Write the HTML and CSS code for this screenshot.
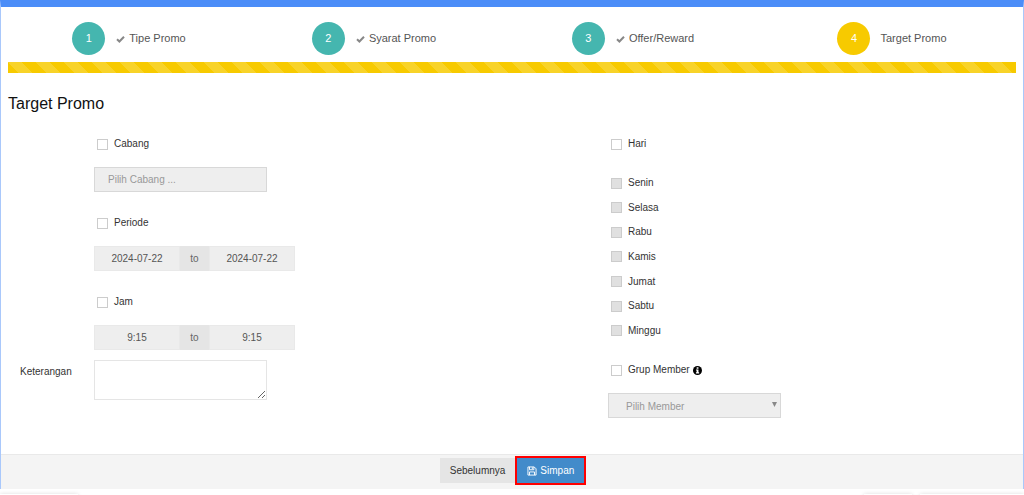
FILE: index.html
```html
<!DOCTYPE html>
<html lang="id">
<head>
<meta charset="utf-8">
<title>Target Promo</title>
<link rel="stylesheet" href="styles.css">
</head>
<body>
<main class="portlet">
  <ol class="steps">
    <li class="step"><span class="step-number">1</span><svg class="check" viewBox="0 0 9 8"><path d="M1 4.2 3.4 6.5 8 1.7"/></svg><span class="step-name">Tipe Promo</span></li>
    <li class="step"><span class="step-number">2</span><svg class="check" viewBox="0 0 9 8"><path d="M1 4.2 3.4 6.5 8 1.7"/></svg><span class="step-name">Syarat Promo</span></li>
    <li class="step"><span class="step-number">3</span><svg class="check" viewBox="0 0 9 8"><path d="M1 4.2 3.4 6.5 8 1.7"/></svg><span class="step-name">Offer/Reward</span></li>
    <li class="step step-active"><span class="step-number">4</span><span class="step-name">Target Promo</span></li>
  </ol>
  <div class="progress"></div>
  <h1 class="title">Target Promo</h1>
  <form class="form" id="promo">
    <div class="column">
      <div class="field">
        <label class="option"><input class="box" type="checkbox">Cabang</label>
        <input class="control" type="text" placeholder="Pilih Cabang ..." aria-label="Pilih Cabang" disabled>
      </div>
      <div class="field">
        <label class="option"><input class="box" type="checkbox">Periode</label>
        <div class="range">
          <input class="range-input" type="text" value="2024-07-22" aria-label="Periode mulai" disabled>
          <span class="range-to">to</span>
          <input class="range-input" type="text" value="2024-07-22" aria-label="Periode selesai" disabled>
        </div>
      </div>
      <div class="field field-tight">
        <label class="option"><input class="box" type="checkbox">Jam</label>
        <div class="range">
          <input class="range-input" type="text" value="9:15" aria-label="Jam mulai" disabled>
          <span class="range-to">to</span>
          <input class="range-input" type="text" value="9:15" aria-label="Jam selesai" disabled>
        </div>
      </div>
      <label class="note-label" for="keterangan">Keterangan</label>
      <textarea class="note" id="keterangan"></textarea>
    </div>
    <div class="column">
      <div class="field field-days">
        <label class="option"><input class="box" type="checkbox">Hari</label>
        <div class="days">
          <label class="option"><input class="box" type="checkbox" disabled>Senin</label>
          <label class="option"><input class="box" type="checkbox" disabled>Selasa</label>
          <label class="option"><input class="box" type="checkbox" disabled>Rabu</label>
          <label class="option"><input class="box" type="checkbox" disabled>Kamis</label>
          <label class="option"><input class="box" type="checkbox" disabled>Jumat</label>
          <label class="option"><input class="box" type="checkbox" disabled>Sabtu</label>
          <label class="option"><input class="box" type="checkbox" disabled>Minggu</label>
        </div>
      </div>
      <div class="field">
        <label class="option"><input class="box" type="checkbox">Grup Member
          <svg class="info" viewBox="0 0 16 16"><circle cx="8" cy="8" r="8"/><path d="M6.5 2.4h3.2v2.4H6.5zM5.3 6.4h4.4v4.9h1.2v1.9H5.2v-1.9h1.3V8.2H5.3z"/></svg>
        </label>
        <div class="select-wrap">
          <select class="control select" aria-label="Pilih Member" disabled><option>Pilih Member</option></select>
          <svg class="caret" viewBox="0 0 5 5"><path d="M0 0h5L2.5 5z"/></svg>
        </div>
      </div>
    </div>
  </form>
  <footer class="actions">
    <button class="button" type="button">Sebelumnya</button>
    <button class="button button-save" type="submit" form="promo"><svg class="save" viewBox="0 0 16 16"><path d="M1.5 1.5h10l3 3v10h-13zM4 1.5V6h7V1.5M8.5 2v3M4 14.5v-5h8v5"/></svg>Simpan</button>
  </footer>
</main>
<div class="below">
  <div class="shade"></div>
  <div class="shade"></div>
  <div class="shade"></div>
</div>
</body>
</html>
```
FILE: styles.css
```css
* { box-sizing: border-box; }

body {
  margin: 0;
  overflow: hidden;
  background: #fff;
  color: #333;
  font: 10px/14px "Liberation Sans", Arial, sans-serif;
}

input, select, textarea, button { font: inherit; border-radius: 0; }

.portlet {
  border: 1px solid #a9c8fb;
  border-top: 7px solid #4b8df8;
  border-bottom: 0;
}

.steps {
  display: grid;
  grid-template-columns: 244fr 246fr 272fr 246fr;
  margin: 0 7px;
  padding: 15px 0 7px;
  list-style: none;
  font-size: 11px;
  color: #555;
}

.step { display: flex; align-items: center; justify-content: center; }

.step-number {
  width: 33px;
  height: 33px;
  margin-right: 11px;
  border-radius: 50%;
  background: #45b6af;
  color: #fff;
  line-height: 32px;
  text-align: center;
}

.step-name { padding: 0 2px 2px 0; }
.step-active .step-number { margin-right: 10px; background: #f7ca00; }

.check {
  width: 9px;
  height: 8px;
  margin-right: 4px;
  fill: none;
  stroke: #888;
  stroke-width: 2;
}

.progress {
  height: 11px;
  margin: 0 7px;
  background: #f7ca00 linear-gradient(45deg,
    rgba(255, 255, 255, .16) 25%, transparent 25%, transparent 50%,
    rgba(255, 255, 255, .16) 50%, rgba(255, 255, 255, .16) 75%,
    transparent 75%) 0 0 / 28px 28px;
}

.title {
  margin: 21px 7px 23px;
  color: #111;
  font-size: 16px;
  font-weight: 400;
  line-height: 20px;
}

.form {
  display: grid;
  grid-template-columns: 1fr 1fr;
  column-gap: 6px;
  padding-bottom: 12px;
}

.column {
  display: grid;
  grid-template-columns: 93px 1fr;
  align-content: start;
}

.field { grid-column: 2; margin-bottom: 24px; }
.field-tight { margin-bottom: 10px; }
.field-days { margin-bottom: 20px; }

.option {
  display: flex;
  align-items: center;
  padding-left: 3px;
  height: 14px;
}

.box {
  appearance: none;
  width: 11px;
  height: 11px;
  margin: 0 6px 0 0;
  border: 1px solid #ccc;
  background: #fff;
}

.box:checked { background: #45b6af; }
.box:disabled { background: #e0e0e0; }

.control {
  display: block;
  width: 173px;
  height: 25px;
  margin-top: 16px;
  padding: 0 13px;
  border: 1px solid #d8d8d8;
  background: #eee;
  color: #999;
}

.control::placeholder { color: #999; opacity: 1; }

.range {
  display: grid;
  grid-template-columns: 86px 29px 86px;
  height: 25px;
  margin-top: 16px;
}

.range-input {
  min-width: 0;
  padding: 0;
  border: 1px solid #e9e9e9;
  background: #eee;
  color: #555;
  text-align: center;
}

.range-to {
  background: #e5e5e5;
  color: #666;
  line-height: 25px;
  text-align: center;
}

.note-label { padding: 5px 0 0 19px; }

.note {
  width: 173px;
  height: 40px;
  border: 1px solid #e5e5e5;
  background: #fff;
}

.days {
  display: grid;
  grid-auto-rows: 1fr;
  align-items: center;
  height: 172px;
  margin-top: 20px;
}

.select-wrap { position: relative; width: 173px; }
.select { appearance: none; padding: 2px 17px 0; opacity: 1; }

.caret {
  position: absolute;
  top: 9px;
  right: 4px;
  width: 5px;
  height: 5px;
  fill: #888;
}

.info { width: 9px; height: 9px; margin-left: 3px; fill: #000; }
.info path { fill: #fff; }

.actions {
  display: flex;
  justify-content: center;
  gap: 2px;
  padding: 3px 0 6px;
  border-top: 1px solid #e9e9e9;
  background: #f4f4f4;
}

.button {
  display: flex;
  align-items: center;
  height: 25px;
  padding: 0 10px;
  border: 0;
  background: #e5e5e5;
  color: #333;
}

.button-save {
  outline: 2px solid #f00;
  background: #428bca;
  color: #fff;
}

.save {
  width: 10px;
  height: 10px;
  margin-right: 3px;
  fill: none;
  stroke: #fff;
  stroke-width: 1.5;
}

.below {
  display: grid;
  grid-template-columns: 78px 1fr 48px 104px;
  column-gap: 8px;
  height: 6px;
  padding-top: 5px;
}

.shade { height: 6px; box-shadow: 0 0 4px #ddd; }
.shade:nth-child(2) { grid-column: 3; }
```
